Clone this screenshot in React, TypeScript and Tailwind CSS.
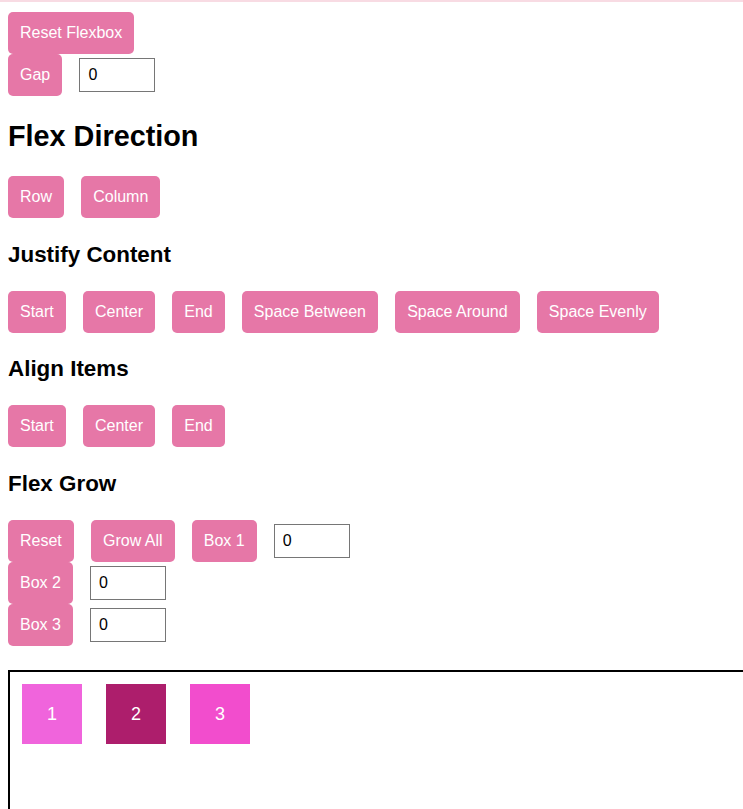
import React from "react";

const font = { fontFamily: '"Liberation Sans", Arial, sans-serif' };

function Btn({ children }: { children: React.ReactNode }) {
  return (
    <button className="bg-[#e677a7] text-white text-base leading-[18px] px-3 py-3 rounded-[5px] whitespace-nowrap">
      {children}
    </button>
  );
}

function Num() {
  return (
    <input
      type="text"
      defaultValue="0"
      className="w-[76px] h-[34px] border border-[#767676] px-2 text-base text-black bg-white outline-none"
    />
  );
}

const h3 = "text-[22.4px] leading-[25.7px] font-bold my-[23.5px]";

export default function App() {
  return (
    <div className="w-[743px] h-[809px] overflow-hidden bg-white text-black" style={font}>
      <div className="h-[2px] bg-[#f8dbe3]" />
      <div className="px-2 pt-[10px]">
        <div className="flex">
          <Btn>Reset Flexbox</Btn>
        </div>
        <div className="flex items-center gap-[17.2px]">
          <Btn>Gap</Btn>
          <Num />
        </div>

        <h2 className="text-[28.8px] leading-[33px] font-bold my-[23.5px]">Flex Direction</h2>
        <div className="flex gap-[17.2px]">
          <Btn>Row</Btn>
          <Btn>Column</Btn>
        </div>

        <h3 className={h3}>Justify Content</h3>
        <div className="flex gap-[17.2px]">
          <Btn>Start</Btn>
          <Btn>Center</Btn>
          <Btn>End</Btn>
          <Btn>Space Between</Btn>
          <Btn>Space Around</Btn>
          <Btn>Space Evenly</Btn>
        </div>

        <h3 className={h3}>Align Items</h3>
        <div className="flex gap-[17.2px]">
          <Btn>Start</Btn>
          <Btn>Center</Btn>
          <Btn>End</Btn>
        </div>

        <h3 className={h3}>Flex Grow</h3>
        <div className="flex items-center gap-[17.2px]">
          <Btn>Reset</Btn>
          <Btn>Grow All</Btn>
          <Btn>Box 1</Btn>
          <Num />
        </div>
        <div className="flex items-center gap-[17.2px]">
          <Btn>Box 2</Btn>
          <Num />
        </div>
        <div className="flex items-center gap-[17.2px]">
          <Btn>Box 3</Btn>
          <Num />
        </div>

        <div className="mt-[24px] w-[820px] h-[300px] border-2 border-black flex items-start">
          <div className="m-3 w-[60px] h-[60px] bg-[#f064dc] text-white text-lg flex items-center justify-center">1</div>
          <div className="m-3 w-[60px] h-[60px] bg-[#ad1e6c] text-white text-lg flex items-center justify-center">2</div>
          <div className="m-3 w-[60px] h-[60px] bg-[#f24dcd] text-white text-lg flex items-center justify-center">3</div>
        </div>
      </div>
    </div>
  );
}
